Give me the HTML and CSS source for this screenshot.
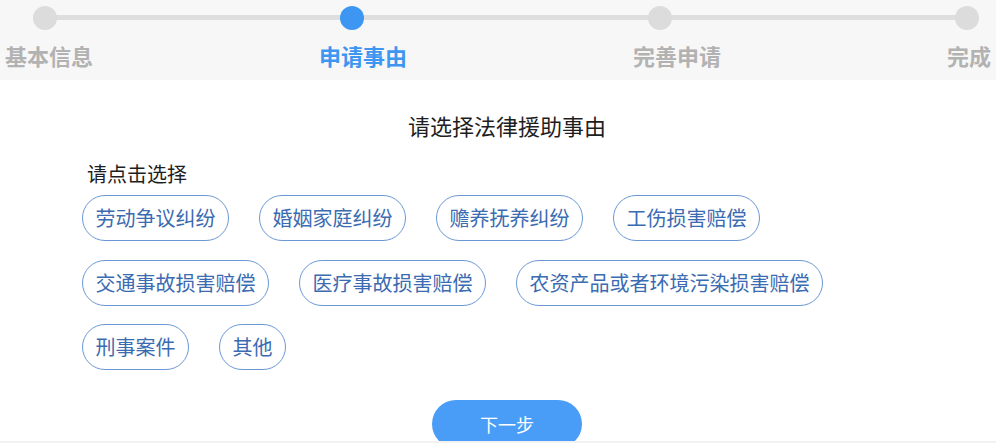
FILE: index.html
```
<!DOCTYPE html>
<html lang="zh-CN">
<head>
<meta charset="utf-8">
<title>申请事由</title>
<link rel="stylesheet" href="styles.css">
</head>
<body>
<header class="steps">
  <div class="track">
    <span class="dot"></span>
    <span class="dot dot-active"></span>
    <span class="dot"></span>
    <span class="dot"></span>
  </div>
  <div class="labels">
    <span class="label">基本信息</span>
    <span class="label label-active">申请事由</span>
    <span class="label">完善申请</span>
    <span class="label">完成</span>
  </div>
</header>
<main class="content">
  <h1 class="title">请选择法律援助事由</h1>
  <p class="hint">请点击选择</p>
  <div class="tags">
    <span class="tag">劳动争议纠纷</span>
    <span class="tag">婚姻家庭纠纷</span>
    <span class="tag">赡养抚养纠纷</span>
    <span class="tag">工伤损害赔偿</span>
    <span class="tag">交通事故损害赔偿</span>
    <span class="tag">医疗事故损害赔偿</span>
    <span class="tag">农资产品或者环境污染损害赔偿</span>
    <span class="tag">刑事案件</span>
    <span class="tag">其他</span>
  </div>
  <div class="actions">
    <button class="next" type="button">下一步</button>
  </div>
</main>
</body>
</html>
```
FILE: styles.css
```
* { box-sizing: border-box; }
html, body { margin: 0; padding: 0; }
body {
  background: #f2f2f2;
  font-family: "Microsoft YaHei", "Noto Sans CJK SC", "Noto Sans", sans-serif;
  width: 996px;
  height: 443px;
  overflow: hidden;
}
.steps {
  height: 80px;
  background: #f7f7f7;
}
.track {
  position: relative;
  display: flex;
  justify-content: space-between;
  padding: 6px 17px 0 33px;
  height: 30px;
}
.track::before {
  content: "";
  position: absolute;
  left: 45px;
  right: 29px;
  top: 15px;
  height: 5px;
  background: #dedede;
}
.dot {
  position: relative;
  width: 24px;
  height: 24px;
  border-radius: 50%;
  background: #dcdcdc;
}
.dot-active { background: #3d97f2; }
.labels {
  display: flex;
  justify-content: space-between;
  padding: 0 5px;
  margin-top: 14px;
}
.label {
  font-size: 22px;
  line-height: 22px;
  font-weight: bold;
  color: #b2b2b2;
}
.label-active { color: #3d96f0; }
.content {
  height: 361px;
  overflow: hidden;
  background: #fff;
  padding-left: 18px;
}
.title {
  margin: 34px 0 0;
  font-size: 22px;
  line-height: 22px;
  font-weight: normal;
  color: #1e1e1e;
  text-align: center;
}
.hint {
  margin: 28px 0 0;
  padding-left: 69px;
  font-size: 20px;
  line-height: 20px;
  color: #1e1e1e;
}
.tags {
  display: flex;
  flex-wrap: wrap;
  column-gap: 30px;
  row-gap: 18.5px;
  margin-top: 11px;
  padding-left: 64px;
  width: 840px;
}
.tag {
  height: 46px;
  line-height: 44px;
  padding: 0 12.5px;
  border: 1px solid #6b98d4;
  border-radius: 23px;
  font-size: 20px;
  color: #3b6bb1;
  white-space: nowrap;
}
.actions {
  display: flex;
  justify-content: center;
  margin-top: 30px;
}
.next {
  width: 150px;
  height: 48px;
  border: none;
  border-radius: 24px;
  background: #4a9df6;
  color: #fff;
  font-family: inherit;
  font-size: 18px;
  line-height: 48px;
  padding: 0;
}
```
